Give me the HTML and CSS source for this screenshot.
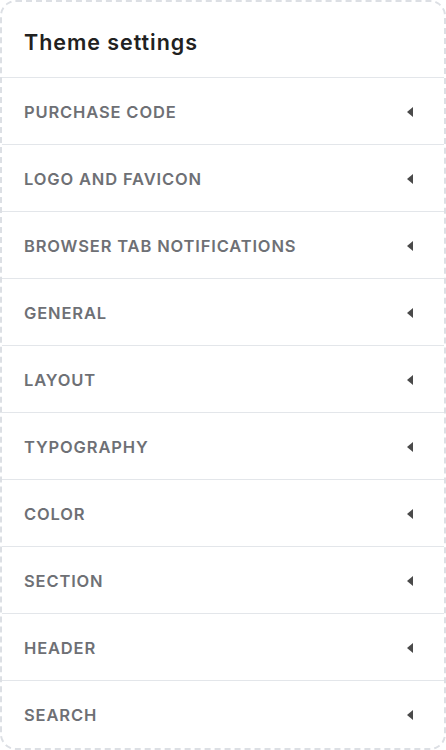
FILE: index.html
```html
<!DOCTYPE html>
<html>
<head>
<title>Theme settings</title>
<link rel="stylesheet" href="styles.css">
</head>
<body>
<div class="panel">
  <h1 class="panel_title">Theme settings</h1>
  <ul class="sections">
    <li class="section"><span>Purchase code</span><i class="caret"></i></li>
    <li class="section"><span>Logo and favicon</span><i class="caret"></i></li>
    <li class="section"><span>Browser tab notifications</span><i class="caret"></i></li>
    <li class="section"><span>General</span><i class="caret"></i></li>
    <li class="section"><span>Layout</span><i class="caret"></i></li>
    <li class="section"><span>Typography</span><i class="caret"></i></li>
    <li class="section"><span>Color</span><i class="caret"></i></li>
    <li class="section"><span>Section</span><i class="caret"></i></li>
    <li class="section"><span>Header</span><i class="caret"></i></li>
    <li class="section"><span>Search</span><i class="caret"></i></li>
  </ul>
</div>
</body>
</html>
```

FILE: styles.css
```css
body {
  margin: 0;
  font-family: Inter, "Noto Sans", sans-serif;
  background-color: #fff;
}

.panel {
  box-sizing: border-box;
  width: 446px;
  height: 750px;
  border: 2px dashed #dcdfe4;
  border-radius: 16px;
  overflow: hidden;
}

.panel_title {
  margin: 0;
  height: 76px;
  box-sizing: border-box;
  padding: 5px 22px 0;
  display: flex;
  align-items: center;
  font-size: 21.5px;
  font-weight: 600;
  letter-spacing: 0.95px;
  color: #212121;
  border-bottom: 1px solid #e3e6ea;
}

.sections {
  list-style: none;
  margin: 0;
  padding: 0;
}

.section {
  height: 67px;
  box-sizing: border-box;
  padding: 1px 31px 0 22px;
  display: flex;
  align-items: center;
  justify-content: space-between;
  border-bottom: 1px solid #e3e6ea;
  text-transform: uppercase;
  font-size: 16.5px;
  font-weight: 600;
  letter-spacing: 0.85px;
  color: #6e7075;
}

.section:last-child {
  border-bottom: none;
}

.caret {
  width: 0;
  height: 0;
  border-top: 5px solid transparent;
  border-bottom: 5px solid transparent;
  border-right: 6px solid #4a4a4a;
}
```
